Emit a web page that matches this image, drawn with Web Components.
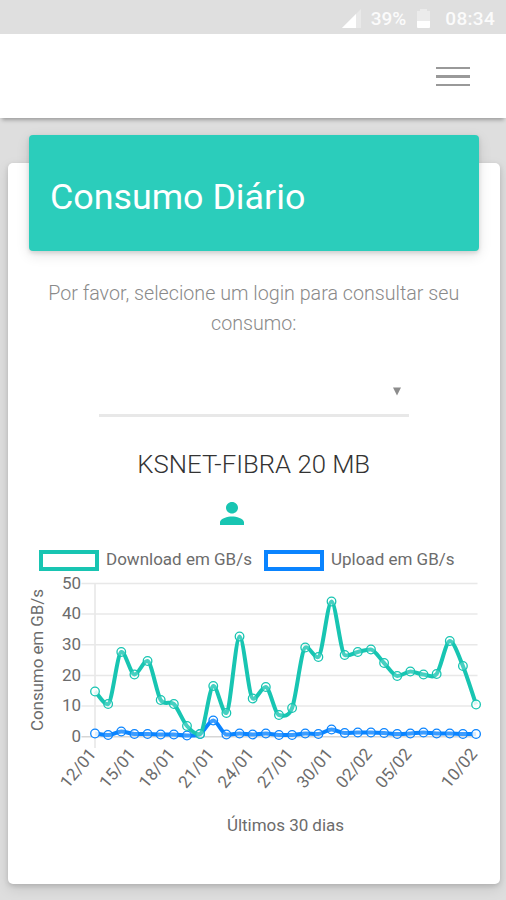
<!DOCTYPE html>
<html lang="pt-BR">
<head>
<meta charset="utf-8">
<meta name="viewport" content="width=device-width, initial-scale=1">
<title>Consumo Diário</title>
<style>
	html, body {
		height: 100%;
	}

	body {
		margin: 0;
		overflow: hidden;
		background: #dedede;
		color: #666;
		font-family: Roboto, "Liberation Sans", sans-serif;
		--brand-color: #2bcdbb;
		--download-color: #18c5b2;
		--upload-color: #0a84ff;
	}
</style>
</head>
<body>
	<status-bar battery="39%" time="08:34"></status-bar>
	<nav-bar></nav-bar>
	<usage-card heading="Consumo Diário">
		<login-select>Por favor, selecione um login para consultar seu consumo:</login-select>
		<plan-info>KSNET-FIBRA 20 MB</plan-info>
		<chart-legend>
			<legend-item color="download">Download em GB/s</legend-item>
			<legend-item color="upload">Upload em GB/s</legend-item>
		</chart-legend>
		<usage-chart></usage-chart>
	</usage-card>

<script>
class StatusBar extends HTMLElement {
	constructor() {
		super()
		this.attachShadow({ mode: 'open' })
		this.shadowRoot.innerHTML = `
			<style>
				:host {
					display: flex;
					justify-content: flex-end;
					align-items: center;
					box-sizing: border-box;
					height: 34px;
					padding: 3px 11px 0 0;
					background: #dfdfdf;
					color: #fbfbfb;
					font-size: 19px;
					font-weight: 500;
				}

				.signal { margin-right: 10px; }
				.battery { margin: 0 14px 0 10px; }
				.time { letter-spacing: .3px; }
				svg { display: block; }
			</style>
			<svg class="signal" width="19" height="20" viewBox="0 0 19 20">
				<path d="M19 0V19H0Z" fill="#e9e9e9"/>
				<path d="M14 5V19H0Z" fill="#fff"/>
			</svg>
			<span>${this.getAttribute('battery')}</span>
			<svg class="battery" width="15" height="20" viewBox="0 0 15 20">
				<path d="M4 0h7v2h3v10H1V2h3Z" fill="#ebebeb"/>
				<path d="M1 12h13v6q0 1-1 1H2q-1 0-1-1Z" fill="#fff"/>
			</svg>
			<span class="time">${this.getAttribute('time')}</span>
		`
	}
}

class NavBar extends HTMLElement {
	constructor() {
		super()
		this.attachShadow({ mode: 'open' })
		this.shadowRoot.innerHTML = `
			<style>
				:host {
					display: flex;
					justify-content: flex-end;
					align-items: center;
					box-sizing: border-box;
					height: 84px;
					padding-right: 36px;
					background: #fff;
					box-shadow: 0 4px 4px -2px rgba(0, 0, 0, .3);
				}

				.menu {
					display: grid;
					gap: 6px;
					width: 34px;
					padding-top: 1px;
				}

				.menu i {
					height: 2.5px;
					background: #999;
				}
			</style>
			<div class="menu"><i></i><i></i><i></i></div>
		`
	}
}

class UsageCard extends HTMLElement {
	constructor() {
		super()
		this.attachShadow({ mode: 'open' })
		this.shadowRoot.innerHTML = `
			<style>
				:host {
					display: flow-root;
					box-sizing: border-box;
					height: 720.5px;
					margin: 45px 6px 0 7.5px;
					border-radius: 5px;
					background: #fff;
					box-shadow: 0 2px 5px rgba(0, 0, 0, .14), 0 5px 14px rgba(0, 0, 0, .1);
				}

				/* the header sticks out of the card */
				.wrap {
					display: flow-root;
					margin-top: -28px;
				}

				.header {
					display: flex;
					align-items: center;
					box-sizing: border-box;
					height: 116px;
					margin: 0 21.5px 0 21px;
					padding: 7px 21.5px 0;
					border-radius: 4px;
					background: var(--brand-color);
					color: #fff;
					font-size: 35.8px;
					box-shadow: 0 4px 14px rgba(0, 0, 0, .11), 0 2px 4px rgba(0, 0, 0, .13);
				}
			</style>
			<div class="wrap">
				<div class="header">${this.getAttribute('heading')}</div>
				<slot></slot>
			</div>
		`
	}
}

class LoginSelect extends HTMLElement {
	constructor() {
		super()
		this.attachShadow({ mode: 'open' })
		this.shadowRoot.innerHTML = `
			<style>
				:host {
					display: flex;
					flex-direction: column;
					align-items: center;
					padding-top: 28px;
				}

				.text {
					width: 430px;
					color: #8a8a8a;
					font-size: 19.7px;
					font-weight: 300;
					line-height: 29.5px;
					text-align: center;
				}

				.select {
					display: flex;
					justify-content: flex-end;
					box-sizing: border-box;
					width: 310px;
					height: 31px;
					margin-top: 47.5px;
					padding: 1px 7px 0 0;
					border-bottom: 3px solid #e8e8e8;
				}
			</style>
			<div class="text"><slot></slot></div>
			<div class="select">
				<svg width="10" height="9" viewBox="0 0 10 9"><path d="M1 0.5H9L5 8.5Z" fill="#8c8c8c"/></svg>
			</div>
		`
	}
}

class PlanInfo extends HTMLElement {
	constructor() {
		super()
		this.attachShadow({ mode: 'open' })
		this.shadowRoot.innerHTML = `
			<style>
				:host {
					display: flex;
					flex-direction: column;
					align-items: center;
					padding-top: 31px;
				}

				.name {
					color: #333;
					font-size: 25.7px;
					font-weight: 300;
					line-height: 32px;
				}

				svg {
					display: block;
					margin: 22.5px 44px 0 0;
				}
			</style>
			<div class="name"><slot></slot></div>
			<svg width="24" height="23" viewBox="4 4 16 16" preserveAspectRatio="none">
				<path fill="var(--download-color)" d="M12 12c2.2 0 4-1.8 4-4s-1.8-4-4-4-4 1.8-4 4 1.8 4 4 4zm0 2c-2.7 0-8 1.3-8 4v2h16v-2c0-2.7-5.3-4-8-4z"/>
			</svg>
		`
	}
}

class ChartLegend extends HTMLElement {
	constructor() {
		super()
		this.attachShadow({ mode: 'open' })
		this.shadowRoot.innerHTML = `
			<style>
				:host {
					display: flex;
					gap: 12px;
					height: 22px;
					padding: 24px 0 0 31.5px;
				}
			</style>
			<slot></slot>
		`
	}
}

class LegendItem extends HTMLElement {
	constructor() {
		super()
		this.attachShadow({ mode: 'open' })
		this.shadowRoot.innerHTML = `
			<style>
				:host {
					display: flex;
					align-items: center;
					gap: 7px;
					color: #6c6c6c;
					font-size: 17px;
					line-height: 22px;
					white-space: nowrap;
				}

				.box {
					box-sizing: border-box;
					width: 60px;
					height: 21px;
					border: 4px solid var(--${this.getAttribute('color')}-color);
				}

				.label {
					position: relative;
					top: -1px;
				}
			</style>
			<span class="box"></span>
			<span class="label"><slot></slot></span>
		`
	}
}

// vertical position of each day's point, 12/01 to 10/02
const DOWNLOAD = [691.5, 704, 652, 674.5, 661, 700, 704, 726, 734, 686, 713, 636.5, 698.5, 687, 715,
	708, 647.5, 657, 601.5, 655, 652, 649.5, 663, 676, 671.5, 674.5, 674, 641, 666, 704.5]
const UPLOAD = [733.5, 735, 731.5, 734, 734, 734.5, 734.5, 735.5, 734, 720.5, 734.5, 733.5, 734.5, 733.5, 735,
	735, 733.5, 734, 729.5, 733, 732.5, 732.5, 733, 734, 733.5, 732.5, 733.5, 733.5, 734, 734]
const LABELS = { 0: '12/01', 3: '15/01', 6: '18/01', 9: '21/01', 12: '24/01', 15: '27/01', 18: '30/01', 21: '02/02', 24: '05/02', 29: '10/02' }
const LEFT = 94.5
const STEP = 13.14

class UsageChart extends HTMLElement {
	constructor() {
		super()
		this.attachShadow({ mode: 'open' })
		this.shadowRoot.innerHTML = `
			<style>
				:host {
					display: block;
				}

				svg {
					display: block;
					width: 100%;
					height: 270px;
				}

				text {
					fill: #6c6c6c;
					font-size: 17px;
				}
			</style>
			<svg viewBox="7.5 571 492.5 270">
				${this.grid()}
				${this.series(UPLOAD, 'var(--upload-color)')}
				${this.series(DOWNLOAD, 'var(--download-color)')}
				<text transform="translate(42 660) rotate(-90)" text-anchor="middle" textLength="142">Consumo em GB/s</text>
				<text x="285" y="831" text-anchor="middle" textLength="117">Últimos 30 dias</text>
			</svg>
		`
	}

	grid() {
		let out = '<path d="M94.5 583V748" stroke="#e6e6e6" stroke-width="1.5"/>'
		for (let i = 0; i <= 5; i++) {
			const y = 736.7 - i * 30.65
			out += `<path d="M81 ${y}H477" stroke="${i ? '#e8e8e8' : '#d6d6d6'}" stroke-width="1.5"/>
				<text x="80.5" y="${y + 5.2}" text-anchor="end">${i * 10}</text>`
		}
		for (const [i, label] of Object.entries(LABELS)) {
			const x = LEFT + i * STEP
			out += `<text transform="translate(${x + 2} 754.5) rotate(-50)" text-anchor="end">${label}</text>`
		}
		return out
	}

	// smooth line, nearly flat at the peaks
	series(ys, color) {
		const last = ys.length - 1
		const pts = ys.map((y, i) => [LEFT + i * STEP, y])
		const slope = ys.map((y, i) => {
			if (i === 0) return ys[1] - y
			if (i === last) return y - ys[i - 1]
			const a = y - ys[i - 1]
			const b = ys[i + 1] - y
			return a * b <= 0 ? (a + b) * 0.12 : (a + b) / 2
		})
		const k = 0.3
		let d = `M${pts[0]}`
		for (let i = 1; i <= last; i++) {
			const [x0, y0] = pts[i - 1]
			const [x1, y1] = pts[i]
			d += `C${x0 + STEP * k} ${y0 + slope[i - 1] * k} ${x1 - STEP * k} ${y1 - slope[i] * k} ${x1} ${y1}`
		}
		const dots = pts.map(([x, y], i) => {
			const end = i === 0 || i === last
			return `<circle cx="${x}" cy="${y}" r="4.3" fill="#fff" fill-opacity="${end ? .85 : .2}" stroke="${color}" stroke-width="1.3"/>`
		}).join('')
		return `<path d="${d}" fill="none" stroke="${color}" stroke-width="4" stroke-linejoin="round"/>${dots}`
	}
}

customElements.define('status-bar', StatusBar)
customElements.define('nav-bar', NavBar)
customElements.define('usage-card', UsageCard)
customElements.define('login-select', LoginSelect)
customElements.define('plan-info', PlanInfo)
customElements.define('chart-legend', ChartLegend)
customElements.define('legend-item', LegendItem)
customElements.define('usage-chart', UsageChart)
</script>
</body>
</html>
